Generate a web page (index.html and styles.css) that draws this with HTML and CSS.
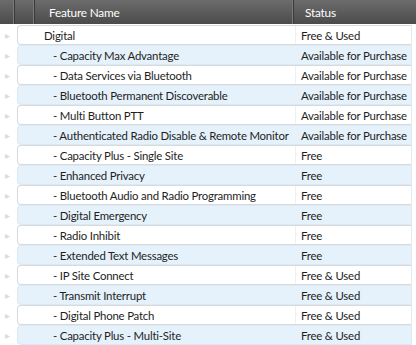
FILE: index.html
```html
<!DOCTYPE html>
<html>
<head>
<meta charset="utf-8">
<link rel="stylesheet" href="styles.css">
</head>
<body>
<div class="grid">
  <div class="head">
    <div class="hcell hind"></div>
    <div class="hcell hexp"></div>
    <div class="hcell hname">Feature Name</div>
    <div class="hcell hstatus">Status</div>
  </div>
  <div class="rows">
    <div class="row"><div class="ind">&#9656;</div><div class="box"><div class="name top">Digital</div><div class="status">Free &amp; Used</div></div></div>
    <div class="row alt"><div class="ind">&#9656;</div><div class="box"><div class="name">- Capacity Max Advantage</div><div class="status">Available for Purchase</div></div></div>
    <div class="row"><div class="ind">&#9656;</div><div class="box"><div class="name">- Data Services via Bluetooth</div><div class="status">Available for Purchase</div></div></div>
    <div class="row alt"><div class="ind">&#9656;</div><div class="box"><div class="name">- Bluetooth Permanent Discoverable</div><div class="status">Available for Purchase</div></div></div>
    <div class="row"><div class="ind">&#9656;</div><div class="box"><div class="name">- Multi Button PTT</div><div class="status">Available for Purchase</div></div></div>
    <div class="row alt"><div class="ind">&#9656;</div><div class="box"><div class="name">- Authenticated Radio Disable &amp; Remote Monitor</div><div class="status">Available for Purchase</div></div></div>
    <div class="row"><div class="ind">&#9656;</div><div class="box"><div class="name">- Capacity Plus - Single Site</div><div class="status">Free</div></div></div>
    <div class="row alt"><div class="ind">&#9656;</div><div class="box"><div class="name">- Enhanced Privacy</div><div class="status">Free</div></div></div>
    <div class="row"><div class="ind">&#9656;</div><div class="box"><div class="name">- Bluetooth Audio and Radio Programming</div><div class="status">Free</div></div></div>
    <div class="row alt"><div class="ind">&#9656;</div><div class="box"><div class="name">- Digital Emergency</div><div class="status">Free</div></div></div>
    <div class="row"><div class="ind">&#9656;</div><div class="box"><div class="name">- Radio Inhibit</div><div class="status">Free</div></div></div>
    <div class="row alt"><div class="ind">&#9656;</div><div class="box"><div class="name">- Extended Text Messages</div><div class="status">Free</div></div></div>
    <div class="row"><div class="ind">&#9656;</div><div class="box"><div class="name">- IP Site Connect</div><div class="status">Free &amp; Used</div></div></div>
    <div class="row alt"><div class="ind">&#9656;</div><div class="box"><div class="name">- Transmit Interrupt</div><div class="status">Free &amp; Used</div></div></div>
    <div class="row"><div class="ind">&#9656;</div><div class="box"><div class="name">- Digital Phone Patch</div><div class="status">Free &amp; Used</div></div></div>
    <div class="row alt"><div class="ind">&#9656;</div><div class="box"><div class="name">- Capacity Plus - Multi-Site</div><div class="status">Free &amp; Used</div></div></div>
  </div>
</div>
</body>
</html>
```

FILE: styles.css
```css
html, body {
  margin: 0;
  padding: 0;
  background: #ffffff;
}
body {
  width: 416px;
  height: 345px;
  overflow: hidden;
  font-family: Lato, "Noto Sans", sans-serif;
  font-size: 11.4px;
  letter-spacing: -0.2px;
  color: #1e1e1e;
}
.grid {
  display: flex;
  flex-direction: column;
}
.head {
  display: grid;
  grid-template-columns: 15px 20px 259px 1fr;
  height: 25px;
  background: linear-gradient(#6c6c6c, #4b4b4b);
  border-bottom: 1px solid #ffffff;
  box-sizing: border-box;
}
.hcell {
  color: #ffffff;
  display: flex;
  align-items: center;
  border-right: 1px solid #3a3a3a;
  box-shadow: inset -1px 0 0 #7a7a7a;
  font-size: 11.8px;
}
.hname { padding-left: 14px; }
.hstatus { padding-left: 11px; border-right: none; box-shadow: none; }
.rows {
  display: flex;
  flex-direction: column;
}
.row {
  display: flex;
  height: 20px;
}
.ind {
  width: 17px;
  flex: none;
  color: #dcdcdc;
  font-size: 10px;
  display: flex;
  align-items: center;
  justify-content: center;
  padding-right: 3px;
  box-sizing: border-box;
}
.box {
  flex: 1;
  display: grid;
  grid-template-columns: 277px 1fr;
  border: 1px solid #d6dbe0;
  border-right-color: #e4e8ec;
  border-radius: 4px 0 0 4px;
  margin-right: 4px;
  background: #ffffff;
}
.row.alt .box {
  background: #e5f2fb;
  border-color: #dde8f0;
}
.name, .status {
  display: flex;
  align-items: center;
  white-space: nowrap;
  overflow: hidden;
}
.name { padding-left: 35px; }
.name.top { padding-left: 26px; }
.status { padding-left: 5px; border-left: 1px solid #eef1f4; }
```
